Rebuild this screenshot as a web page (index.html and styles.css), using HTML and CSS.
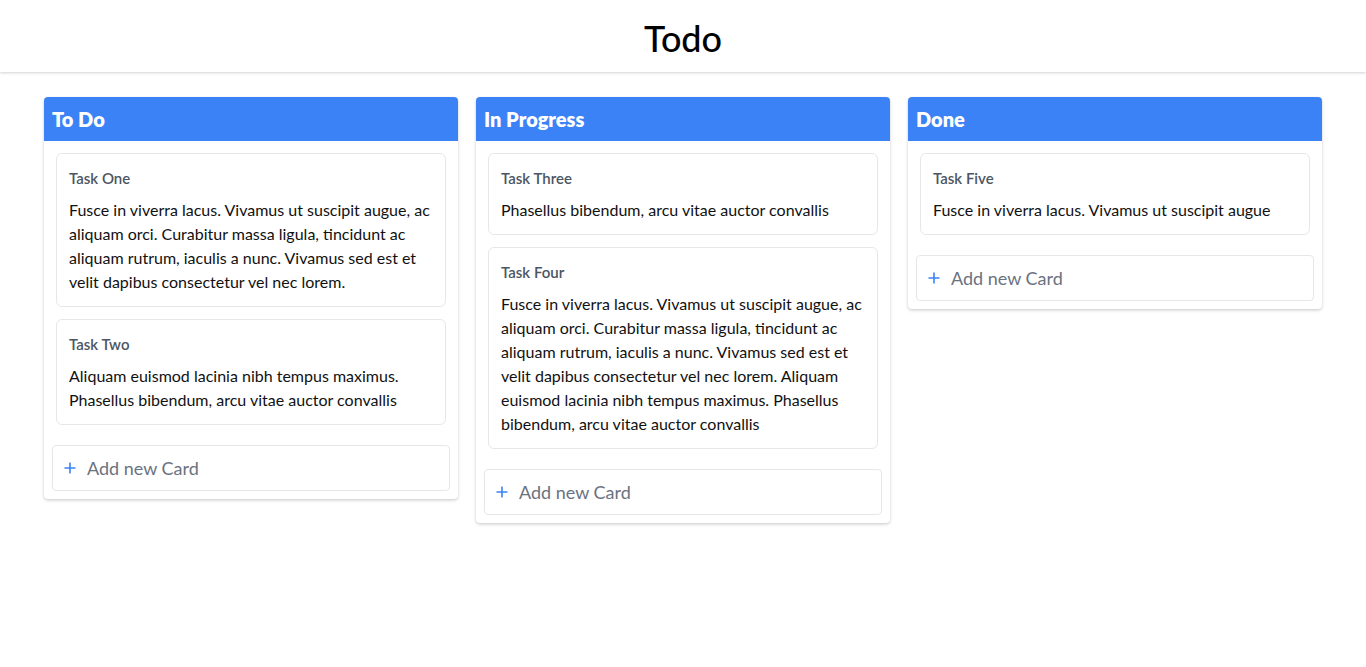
FILE: index.html
```html
<!DOCTYPE html>
<html lang="en">
<head>
<meta charset="utf-8">
<title>Todo</title>
<link rel="stylesheet" href="styles.css">
</head>
<body>
<header class="topbar"><h1 class="topbar-title">Todo</h1></header>
<main class="board">
  <section class="column">
    <h2 class="column-head">To Do</h2>
    <div class="column-body">
      <article class="card">
        <h3 class="card-title">Task One</h3>
        <p class="card-text">Fusce in viverra lacus. Vivamus ut suscipit augue, ac aliquam orci. Curabitur massa ligula, tincidunt ac aliquam rutrum, iaculis a nunc. Vivamus sed est et velit dapibus consectetur vel nec lorem.</p>
      </article>
      <article class="card">
        <h3 class="card-title">Task Two</h3>
        <p class="card-text">Aliquam euismod lacinia nibh tempus maximus. Phasellus bibendum, arcu vitae auctor convallis</p>
      </article>
      <button class="add-card" type="button"><svg class="plus" viewBox="0 0 12 12" width="12" height="12"><path d="M6 0.5v11M0.5 6h11" stroke="currentColor" stroke-width="1.6" fill="none"/></svg><span>Add new Card</span></button>
    </div>
  </section>
  <section class="column">
    <h2 class="column-head">In Progress</h2>
    <div class="column-body">
      <article class="card">
        <h3 class="card-title">Task Three</h3>
        <p class="card-text">Phasellus bibendum, arcu vitae auctor convallis</p>
      </article>
      <article class="card">
        <h3 class="card-title">Task Four</h3>
        <p class="card-text">Fusce in viverra lacus. Vivamus ut suscipit augue, ac aliquam orci. Curabitur massa ligula, tincidunt ac aliquam rutrum, iaculis a nunc. Vivamus sed est et velit dapibus consectetur vel nec lorem. Aliquam euismod lacinia nibh tempus maximus. Phasellus bibendum, arcu vitae auctor convallis</p>
      </article>
      <button class="add-card" type="button"><svg class="plus" viewBox="0 0 12 12" width="12" height="12"><path d="M6 0.5v11M0.5 6h11" stroke="currentColor" stroke-width="1.6" fill="none"/></svg><span>Add new Card</span></button>
    </div>
  </section>
  <section class="column">
    <h2 class="column-head">Done</h2>
    <div class="column-body">
      <article class="card">
        <h3 class="card-title">Task Five</h3>
        <p class="card-text">Fusce in viverra lacus. Vivamus ut suscipit augue</p>
      </article>
      <button class="add-card" type="button"><svg class="plus" viewBox="0 0 12 12" width="12" height="12"><path d="M6 0.5v11M0.5 6h11" stroke="currentColor" stroke-width="1.6" fill="none"/></svg><span>Add new Card</span></button>
    </div>
  </section>
</main>
</body>
</html>
```
FILE: styles.css
```css
* { box-sizing: border-box; }
html, body { margin: 0; padding: 0; background: #fff; }
body {
  font-family: "Segoe UI", Lato, "Noto Sans", sans-serif;
  color: #111;
}
.topbar {
  height: 72px;
  display: flex;
  align-items: center;
  justify-content: center;
  box-shadow: 0 1px 3px rgba(0,0,0,0.12), 0 1px 2px rgba(0,0,0,0.06);
  background: #fff;
}
.topbar-title {
  margin: 0;
  font-size: 36px;
  font-weight: 500;
  color: #000;
  line-height: 1;
  padding-top: 4px;
}
.board {
  display: grid;
  grid-template-columns: repeat(3, 1fr);
  gap: 18px;
  padding: 25px 44px;
  align-items: start;
}
.column {
  background: #fff;
  border-radius: 4px;
  box-shadow: 0 1px 3px rgba(0,0,0,0.16), 0 2px 4px rgba(0,0,0,0.06);
  overflow: hidden;
}
.column-head {
  margin: 0;
  height: 44px;
  display: flex;
  align-items: center;
  padding: 0 8px;
  background: #3b82f6;
  color: #fff;
  font-size: 20px;
  font-weight: 800;
}
.column-body {
  display: flex;
  flex-direction: column;
  gap: 12px;
  padding: 12px 12px 8px;
}
.card {
  border: 1px solid #e5e7eb;
  border-radius: 6px;
  padding: 12px;
  background: #fff;
}
.card-title {
  margin: 0 0 8px;
  font-size: 15px;
  line-height: 24px;
  font-weight: 600;
  color: #4b5563;
}
.card-text {
  margin: 0;
  font-size: 16px;
  line-height: 24px;
  color: #111;
}
.add-card {
  margin: 8px -4px 0;
  height: 46px;
  display: flex;
  align-items: center;
  gap: 11px;
  padding: 0 11px;
  border: 1px solid #e5e7eb;
  border-radius: 4px;
  background: #fff;
  font-family: inherit;
  font-size: 18px;
  color: #6b7280;
  text-align: left;
  cursor: pointer;
}
.plus { color: #3b82f6; flex: none; }
```
